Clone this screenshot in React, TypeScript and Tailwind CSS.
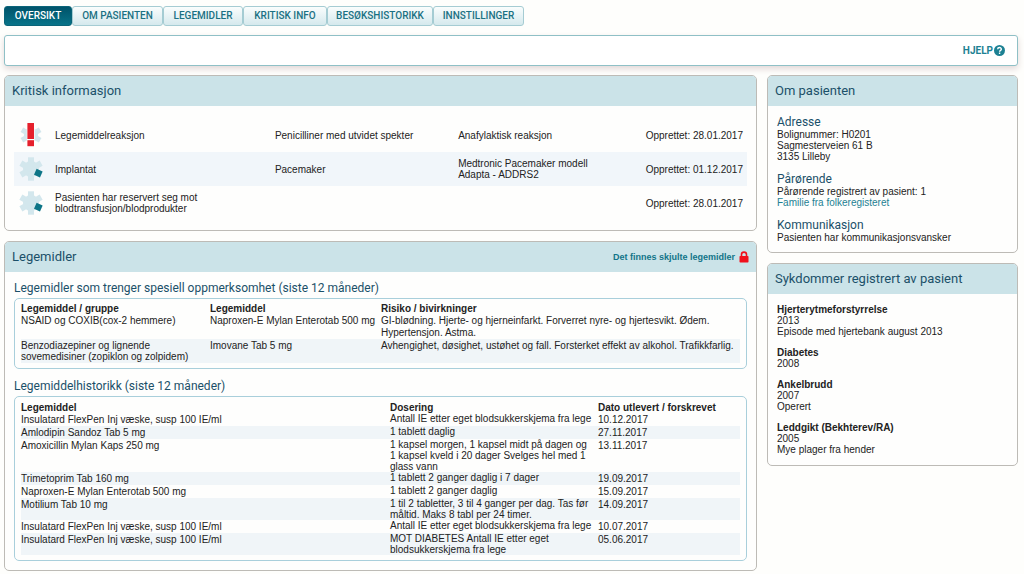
import type { ReactNode } from "react";

const TABS = [
  { label: "OVERSIKT", width: "w-[68px]" },
  { label: "OM PASIENTEN", width: "w-[91px]" },
  { label: "LEGEMIDLER", width: "w-[80px]" },
  { label: "KRITISK INFO", width: "w-[84px]" },
  { label: "BESØKSHISTORIKK", width: "w-[106px]" },
  { label: "INNSTILLINGER", width: "w-[91px]" },
];

const CRITICAL = [
  { icon: "alert", name: "Legemiddelreaksjon", what: "Penicilliner med utvidet spekter", info: "Anafylaktisk reaksjon", date: "28.01.2017" },
  { icon: "note", name: "Implantat", what: "Pacemaker", info: "Medtronic Pacemaker modell Adapta - ADDRS2", date: "01.12.2017" },
  { icon: "note", name: "Pasienten har reservert seg mot blodtransfusjon/blodprodukter", what: "", info: "", date: "28.01.2017" },
];

const ATTENTION = [
  {
    group: "NSAID og COXIB(cox-2 hemmere)",
    drug: "Naproxen-E Mylan Enterotab 500 mg",
    risk: "GI-blødning. Hjerte- og hjerneinfarkt. Forverret nyre- og hjertesvikt. Ødem. Hypertensjon. Astma.",
  },
  {
    group: "Benzodiazepiner og lignende sovemedisiner (zopiklon og zolpidem)",
    drug: "Imovane Tab 5 mg",
    risk: "Avhengighet, døsighet, ustøhet og fall. Forsterket effekt av alkohol. Trafikkfarlig.",
  },
];

const HISTORY = [
  ["Insulatard FlexPen Inj væske, susp 100 IE/ml", "Antall IE etter eget blodsukkerskjema fra lege", "10.12.2017"],
  ["Amlodipin Sandoz Tab 5 mg", "1 tablett daglig", "27.11.2017"],
  ["Amoxicillin Mylan Kaps 250 mg", "1 kapsel morgen, 1 kapsel midt på dagen og 1 kapsel kveld i 20 dager Svelges hel med 1 glass vann", "13.11.2017"],
  ["Trimetoprim Tab 160 mg", "1 tablett 2 ganger daglig i 7 dager", "19.09.2017"],
  ["Naproxen-E Mylan Enterotab 500 mg", "1 tablett 2 ganger daglig", "15.09.2017"],
  ["Motilium Tab 10 mg", "1 til 2 tabletter, 3 til 4 ganger per dag. Tas før måltid. Maks 8 tabl per 24 timer.", "14.09.2017"],
  ["Insulatard FlexPen Inj væske, susp 100 IE/ml", "Antall IE etter eget blodsukkerskjema fra lege", "10.07.2017"],
  ["Insulatard FlexPen Inj væske, susp 100 IE/ml", "MOT DIABETES Antall IE etter eget blodsukkerskjema fra lege", "05.06.2017"],
];

const DISEASES = [
  { name: "Hjerterytmeforstyrrelse", lines: ["2013", "Episode med hjertebank august 2013"] },
  { name: "Diabetes", lines: ["2008"] },
  { name: "Ankelbrudd", lines: ["2007", "Operert"] },
  { name: "Leddgikt (Bekhterev/RA)", lines: ["2005", "Mye plager fra hender"] },
];

function CriticalIcon({ kind }: { kind: string }) {
  const alert = kind === "alert";
  return (
    <svg viewBox="0 0 24 24" className="block h-6 w-6" aria-hidden="true">
      {/* the alert star is smaller, so the mark sticks out above and below */}
      <g fill="#d3e7ed" transform={alert ? "translate(1.2 1.2) scale(.9)" : undefined}>
        <circle cx="12" cy="12" r="8" />
        {[0, 60, 120].map(a => (
          <rect key={a} x="9" y="0.3" width="6" height="23.4" transform={`rotate(${a} 12 12)`} />
        ))}
      </g>
      {alert ? (
        <g>
          <rect x="7.8" y="0" width="7.8" height="24" fill="#fff" />
          <rect x="8.4" y="0" width="6.6" height="16" fill="#e5202c" />
          <rect x="8.4" y="17.2" width="6.6" height="6" fill="#e5202c" />
        </g>
      ) : (
        <path d="M17.6 11.8l6 2.6-2.6 6-6-2.6z" fill="#0d7587" />
      )}
    </svg>
  );
}

function Panel({ title, extra, children }: { title: string; extra?: ReactNode; children: ReactNode }) {
  return (
    <section className="overflow-hidden rounded-[5px] border border-[#bdbbb6] bg-[#fefefd]">
      <header className="flex h-[30px] items-center justify-between bg-[#cbe3e8] px-[7px]">
        <h2 className="font-['Roboto',sans-serif] text-[13px] leading-[16px] text-[#1b5069]">{title}</h2>
        {extra}
      </header>
      {children}
    </section>
  );
}

function SubTitle({ children }: { children: ReactNode }) {
  return <h3 className="font-['Roboto',sans-serif] text-[12px] leading-[14px] text-[#1b5069]">{children}</h3>;
}

function CriticalTable() {
  return (
    <table className="w-full table-fixed">
      <colgroup>
        <col className="w-[41px]" />
        <col className="w-[30%]" />
        <col className="w-[25%]" />
        <col className="w-[20%]" />
        <col />
      </colgroup>
      <tbody>
        {CRITICAL.map(c => (
          <tr key={c.name} className="h-[34px] even:bg-[#f1f6fa]">
            <td className="pl-[5px]"><CriticalIcon kind={c.icon} /></td>
            <td className="pr-[60px]">{c.name}</td>
            <td>{c.what}</td>
            <td>{c.info}</td>
            <td className="pr-1 text-right">Opprettet: {c.date}</td>
          </tr>
        ))}
      </tbody>
    </table>
  );
}

function AttentionTable() {
  return (
    <table className="w-full table-fixed text-left">
      <colgroup>
        <col className="w-[189px]" />
        <col className="w-[171px]" />
        <col />
      </colgroup>
      <thead>
        <tr>
          <th>Legemiddel / gruppe</th>
          <th>Legemiddel</th>
          <th>Risiko / bivirkninger</th>
        </tr>
      </thead>
      <tbody className="align-top">
        {ATTENTION.map(a => (
          <tr key={a.group} className="h-6 even:bg-[#f0f5f8]">
            <td className="pt-px">{a.group}</td>
            <td className="pt-px whitespace-nowrap">{a.drug}</td>
            <td className="pt-px leading-[12px]">{a.risk}</td>
          </tr>
        ))}
      </tbody>
    </table>
  );
}

function HistoryTable() {
  return (
    <table className="w-full table-fixed text-left">
      <colgroup>
        <col />
        <col className="w-[208px]" />
        <col className="w-[142px]" />
      </colgroup>
      <thead>
        <tr className="h-3">
          <th>Legemiddel</th>
          <th>Dosering</th>
          <th>Dato utlevert / forskrevet</th>
        </tr>
      </thead>
      <tbody className="align-top">
        {HISTORY.map(([drug, dose, date]) => (
          <tr key={date} className="even:bg-[#f0f5f8]">
            <td className="leading-[13px]">{drug}</td>
            <td className="pr-1">{dose}</td>
            <td className="leading-[13px]">{date}</td>
          </tr>
        ))}
      </tbody>
    </table>
  );
}

export default function App() {
  return (
    <div className="min-h-screen bg-[#fefefc] pt-1.5 pr-1.5 pb-[3px] pl-1 font-['Liberation_Sans',Arial,sans-serif] text-[10px] leading-[11px] text-[#222]">
      <nav className="flex">
        {TABS.map((tab, i) => (
          <button
            key={tab.label}
            type="button"
            className={`h-5 ${tab.width} rounded-[3px] border font-['Roboto',sans-serif] text-[10px] leading-[12px] font-medium whitespace-nowrap ${
              i === 0
                ? "border-[#0a6478] bg-linear-to-b from-[#00536a] to-[#087388] text-white"
                : "border-[#a5ccd3] bg-linear-to-b from-[#fafdfd] to-[#d5e9ed] text-[#1b7183]"
            }`}
          >
            {tab.label}
          </button>
        ))}
      </nav>

      <div className="mt-[9px] flex h-[31px] items-center justify-end rounded-[3px] border border-[#8fc0c6] bg-white pr-3 shadow-[0_3px_6px_#e2d8d8]">
        <a href="#hjelp" className="flex items-center gap-px font-['Roboto',sans-serif] text-[10px] font-bold text-[#1d8193]">
          HJELP
          <svg viewBox="0 0 12 12" className="h-[11px] w-[11px]" aria-hidden="true">
            <circle cx="6" cy="6" r="6" fill="#1d8193" />
            <path d="M4 4.6C4 2.2 8 2.2 8 4.5 8 5.9 6.1 5.8 6.1 7.3M6.1 8.3v1.5" fill="none" stroke="#fff" strokeWidth="1.5" />
          </svg>
        </a>
      </div>

      <main className="mt-[9px] grid grid-cols-[3fr_1fr] items-start gap-[10px]">
        <div className="flex flex-col gap-[10px]">
          <Panel title="Kritisk informasjon">
            <div className="px-[9px] pt-3 pb-[10px]">
              <CriticalTable />
            </div>
          </Panel>

          <Panel
            title="Legemidler"
            extra={
              <span className="flex items-center gap-1 text-[9px] font-bold text-[#127488]">
                Det finnes skjulte legemidler
                <svg viewBox="0 0 10 12" className="h-3 w-[10px]" aria-hidden="true">
                  <path d="M2.5 6V3.6a2.5 2.5 0 0 1 5 0V6" fill="none" stroke="#f0101c" strokeWidth="1.6" />
                  <rect x="0.5" y="5" width="9" height="6.5" rx="0.8" fill="#f0101c" />
                </svg>
              </span>
            }
          >
            <div className="px-[9px] pt-[9px] pb-[9px]">
              <SubTitle>Legemidler som trenger spesiell oppmerksomhet (siste 12 måneder)</SubTitle>
              <div className="mt-[3px] rounded-[5px] border border-[#a9cfdb] px-1.5 pt-1 pb-[5px]">
                <AttentionTable />
              </div>
              <div className="mt-[10px]">
                <SubTitle>Legemiddelhistorikk (siste 12 måneder)</SubTitle>
              </div>
              <div className="mt-[3px] rounded-[5px] border border-[#a9cfdb] px-1.5 pt-1 pb-[5px]">
                <HistoryTable />
              </div>
            </div>
          </Panel>
        </div>

        <div className="flex flex-col gap-[10px]">
          <Panel title="Om pasienten">
            <div className="flex flex-col gap-[10px] p-[9px]">
              <div>
                <SubTitle>Adresse</SubTitle>
                <p>Bolignummer: H0201</p>
                <p>Sagmesterveien 61 B</p>
                <p>3135 Lilleby</p>
              </div>
              <div>
                <SubTitle>Pårørende</SubTitle>
                <p>Pårørende registrert av pasient: 1</p>
                <a href="#familie" className="block text-[#1d8193]">Familie fra folkeregisteret</a>
              </div>
              <div>
                <SubTitle>Kommunikasjon</SubTitle>
                <p>Pasienten har kommunikasjonsvansker</p>
              </div>
            </div>
          </Panel>

          <Panel title="Sykdommer registrert av pasient">
            <div className="flex flex-col gap-[10px] px-[9px] py-[10px]">
              {DISEASES.map(d => (
                <div key={d.name}>
                  <h3 className="font-bold">{d.name}</h3>
                  {d.lines.map(line => <p key={line}>{line}</p>)}
                </div>
              ))}
            </div>
          </Panel>
        </div>
      </main>
    </div>
  );
}
